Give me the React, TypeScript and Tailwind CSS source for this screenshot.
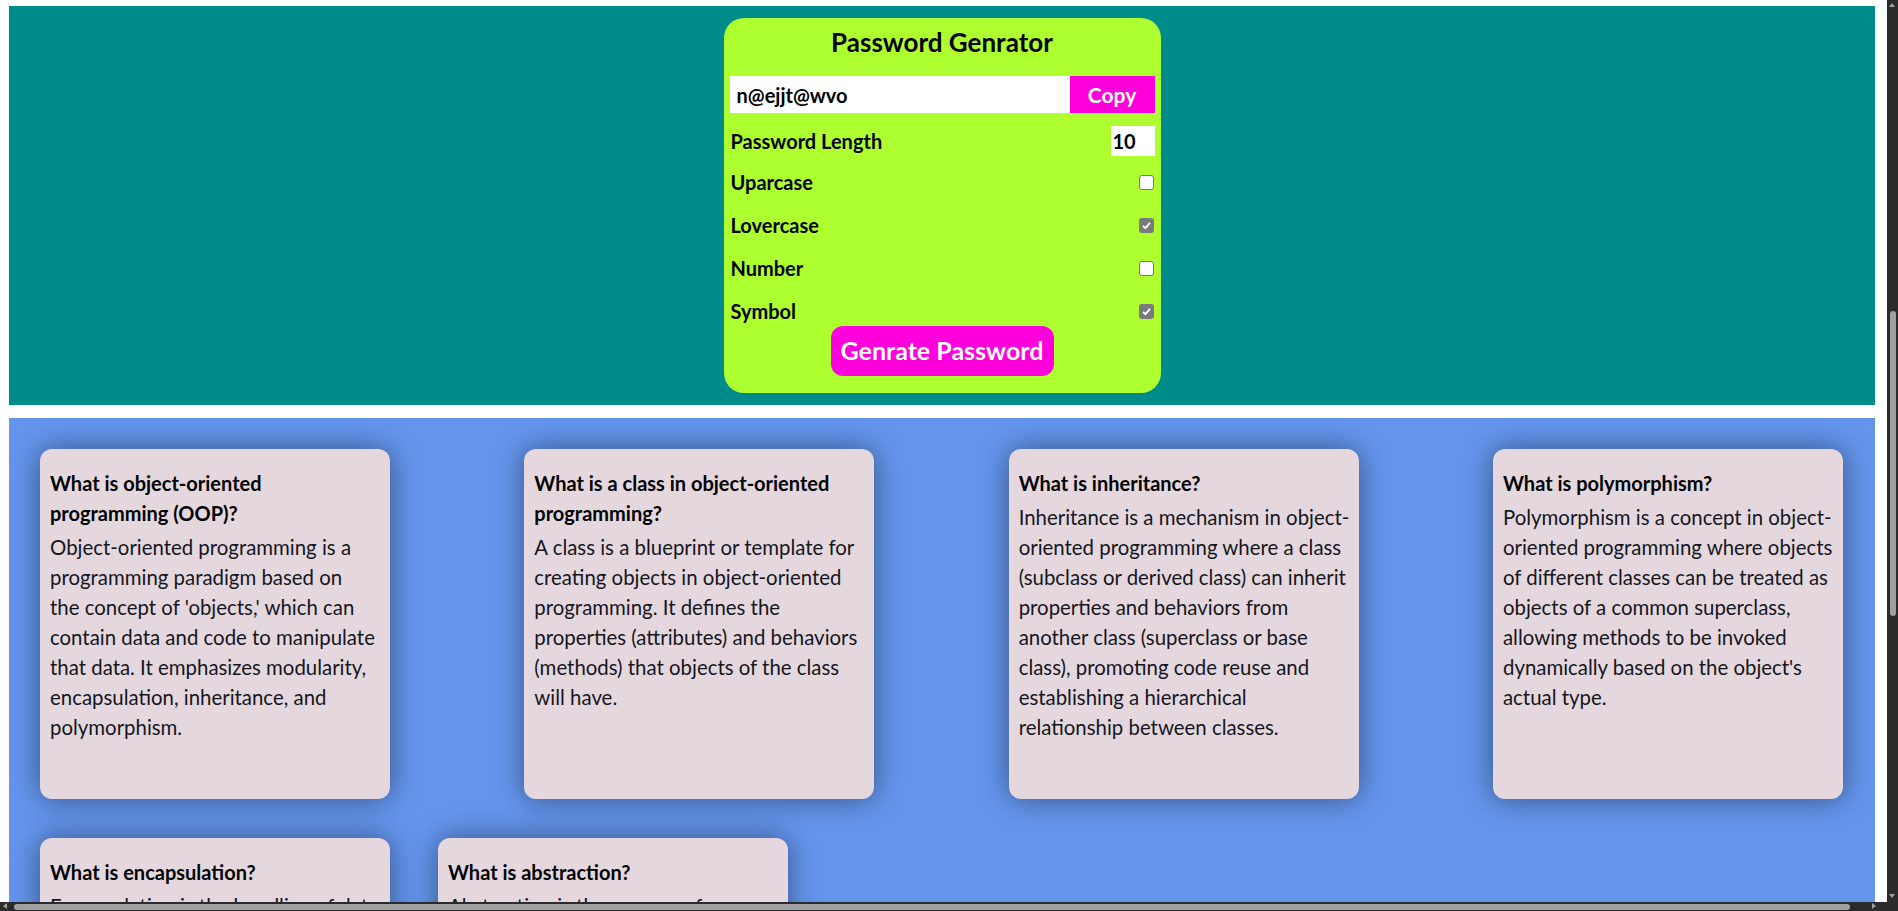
import React from "react";

type CardData = { q: string[]; a: string[] };

const cards1: CardData[] = [
  {
    q: ["What is object-oriented", "programming (OOP)?"],
    a: [
      "Object-oriented programming is a",
      "programming paradigm based on",
      "the concept of 'objects,' which can",
      "contain data and code to manipulate",
      "that data. It emphasizes modularity,",
      "encapsulation, inheritance, and",
      "polymorphism.",
    ],
  },
  {
    q: ["What is a class in object-oriented", "programming?"],
    a: [
      "A class is a blueprint or template for",
      "creating objects in object-oriented",
      "programming. It defines the",
      "properties (attributes) and behaviors",
      "(methods) that objects of the class",
      "will have.",
    ],
  },
  {
    q: ["What is inheritance?"],
    a: [
      "Inheritance is a mechanism in object-",
      "oriented programming where a class",
      "(subclass or derived class) can inherit",
      "properties and behaviors from",
      "another class (superclass or base",
      "class), promoting code reuse and",
      "establishing a hierarchical",
      "relationship between classes.",
    ],
  },
  {
    q: ["What is polymorphism?"],
    a: [
      "Polymorphism is a concept in object-",
      "oriented programming where objects",
      "of different classes can be treated as",
      "objects of a common superclass,",
      "allowing methods to be invoked",
      "dynamically based on the object's",
      "actual type.",
    ],
  },
];

const cards2: CardData[] = [
  {
    q: ["What is encapsulation?"],
    a: [
      "Encapsulation is the bundling of data",
      "and methods that operate on that data",
      "within a single unit, restricting",
      "direct access to some of the object's",
      "components.",
    ],
  },
  {
    q: ["What is abstraction?"],
    a: [
      "Abstraction is the process of",
      "simplifying complex systems by",
      "modeling classes based on their",
      "essential properties and behaviors.",
    ],
  },
];

function Lines({ lines }: { lines: string[] }) {
  return (
    <>
      {lines.map((l, i) => (
        <span key={i} className="block whitespace-nowrap">
          {l}
        </span>
      ))}
    </>
  );
}

function Card({ q, a }: CardData) {
  return (
    <div className="w-[350px] h-[350px] shrink-0 rounded-[12px] bg-[#e4d8de] px-[10px] pt-[19px] shadow-[0_0_30px_rgba(0,0,0,0.45)]">
      <h3 className="text-[20px] leading-[30px] font-bold text-black">
        <Lines lines={q} />
      </h3>
      <p className="mt-[4px] text-[20.4px] leading-[30px] text-[#16161e]">
        <Lines lines={a} />
      </p>
    </div>
  );
}

function Check({ checked }: { checked: boolean }) {
  return checked ? (
    <span className="flex h-[15px] w-[15px] items-center justify-center rounded-[3px] bg-[#7a7a7a]">
      <svg width="11" height="11" viewBox="0 0 11 11">
        <path d="M2 5.8 L4.4 8.2 L9 2.8" fill="none" stroke="white" strokeWidth="1.8" />
      </svg>
    </span>
  ) : (
    <span className="block h-[15px] w-[15px] rounded-[3px] border border-[#767676] bg-white" />
  );
}

function Row({ label, checked }: { label: string; checked: boolean }) {
  return (
    <div className="flex h-[28px] items-center justify-between pl-[1px] pr-[1px]">
      <span className="text-[20px] font-bold text-black">{label}</span>
      <Check checked={checked} />
    </div>
  );
}

export default function App() {
  return (
    <div
      className="relative h-[911px] w-[1898px] overflow-hidden bg-white"
      style={{ fontFamily: "Lato, 'Noto Sans', sans-serif" }}
    >
      <div className="pl-[9px] pt-[6px]">
        {/* Top teal section */}
        <section className="h-[399px] w-[1866px] bg-[#008b8b] pt-[12px]">
          <div className="mx-auto h-[375px] w-[437px] rounded-[20px] bg-[#adff2f] px-[6px]">
            <h1 className="h-[48px] text-center text-[26px] font-bold leading-[48px] text-black">
              Password Genrator
            </h1>
            <div className="mt-[10px] flex h-[37px]">
              <div className="flex flex-1 items-center bg-white pl-[7px] text-[20px] font-bold text-black">
                n@ejjt@wvo
              </div>
              <button className="w-[85px] bg-[#ff00dd] text-[21px] font-bold text-white">Copy</button>
            </div>
            <div className="mt-[13px] flex h-[30px] items-center justify-between pl-[1px]">
              <span className="text-[20px] font-bold text-black">Password Length</span>
              <div className="flex h-[30px] w-[44px] items-center bg-white pl-[2px] text-[20px] font-bold text-black">
                10
              </div>
            </div>
            <div className="mt-[12px] flex flex-col gap-[15px]">
              <Row label="Uparcase" checked={false} />
              <Row label="Lovercase" checked={true} />
              <Row label="Number" checked={false} />
              <Row label="Symbol" checked={true} />
            </div>
            <div className="mt-[1px] flex justify-center">
              <button className="h-[50px] w-[223px] rounded-[12px] bg-[#ff00dd] text-[25px] font-bold text-white">
                Genrate Password
              </button>
            </div>
          </div>
        </section>

        {/* Cards section */}
        <section className="mt-[13px] h-[900px] w-[1866px] bg-[#6495ed] pt-[31px]">
          <div className="flex justify-between pl-[31px] pr-[32px]">
            {cards1.map((c) => (
              <Card key={c.q.join(" ")} {...c} />
            ))}
          </div>
          <div className="mt-[39px] flex gap-[48px] pl-[31px]">
            {cards2.map((c) => (
              <Card key={c.q.join(" ")} {...c} />
            ))}
          </div>
        </section>
      </div>

      {/* Fake browser scrollbars (overlay) */}
      <div className="absolute right-0 top-0 h-[902px] w-[11px] bg-[#2b2b2b]">
        <div className="absolute left-[2px] top-[3px] h-0 w-0 border-x-[3.5px] border-b-[4px] border-x-transparent border-b-[#a0a0a0]" />
        <div className="absolute left-[3px] top-[311px] h-[305px] w-[6px] rounded-[3px] bg-[#a0a0a0]" />
        <div className="absolute bottom-[4px] left-[2px] h-0 w-0 border-x-[3.5px] border-t-[4px] border-x-transparent border-t-[#a0a0a0]" />
      </div>
      <div className="absolute bottom-0 left-0 h-[9px] w-[1898px] bg-[#2b2b2b]">
        <div className="absolute left-[3px] top-[1px] h-0 w-0 border-y-[3.5px] border-r-[4px] border-y-transparent border-r-[#a0a0a0]" />
        <div className="absolute left-[14px] top-[2px] h-[6px] w-[1836px] rounded-[3px] bg-[#a0a0a0]" />
        <div className="absolute left-[1872px] top-[1px] h-0 w-0 border-y-[3.5px] border-l-[4px] border-y-transparent border-l-[#a0a0a0]" />
      </div>
    </div>
  );
}
